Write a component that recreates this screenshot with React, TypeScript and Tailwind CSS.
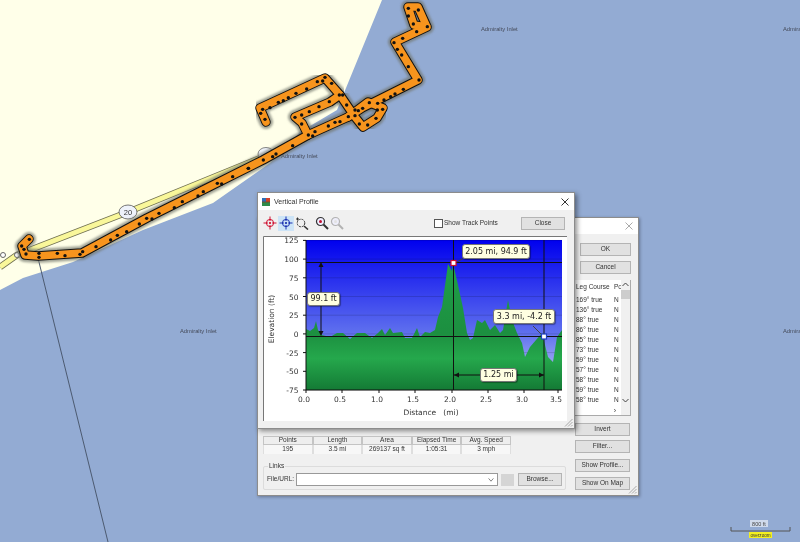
import React from "react";

const tr = (a: number[][], ox: number, oy: number) => a.map(([x, y]) => [x / 3 + ox, y / 3 + oy]);
const dotsA = tr([[505,25],[535,30],[505,48],[520,72],[562,80],[530,95],[488,115],[462,128],[472,148],[485,165],[505,200],[537,240],[490,268],[465,282],[452,290],[432,300],[413,310],[388,308],[368,325],[355,332],[345,330],[345,347],[325,350],[300,365],[285,367],[265,378],[225,395],[205,405],[218,408],[185,372],[185,345],[165,352],[208,335],[237,320],[268,305],[298,285],[308,285],[320,315],[275,250],[255,232],[248,243],[232,245],[200,267],[168,280],[145,293],[130,302],[115,307],[90,323],[68,328],[62,340],[75,358],[158,437],[108,462],[98,470],[70,480],[25,505],[358,372],[383,375],[408,355],[428,328],[412,330]], 240, 0);
const dotsB = tr([[88,298],[65,318],[72,328],[78,342],[117,340],[117,352],[172,340],[195,347],[240,343],[248,335],[288,320],[332,300],[352,286],[380,275],[418,252],[440,235],[456,237],[477,220],[523,203],[547,185],[594,168],[610,155],[652,130],[665,132],[698,110],[745,85]], 0, 140);

const trackPaths = [
  "M29 239 L22 246 L25 255 L38 256 L82 253 L147 218 L217 183 L263 160 L308 135 L348 117 L362 108 L418 80 L395 42 L427 27 L418 7 L408 7 L414 25 L427 27",
  "M308 135 L302 123 L295 117 L330 102 L340 95 L325 78 L260 108 L266 122",
  "M340 95 L355 117 L363 127 L377 118 L383 108 L368 102 L348 117",
];

const profile = "306,390 306,329 310,331 314,328 316,321 318,330 322,335 330,337 337,333 343,333 350,339 357,333 365,333 372,338 378,333 382,329 385,335 390,328 393,333 402,332 405,338 412,338 417,328 420,337 425,332 430,333 435,330 438,317 442,307 448,264 452,271 453,263 458,285 463,308 467,333 470,340 473,338 477,320 482,323 485,320 490,330 495,325 500,333 503,330 508,300 512,320 517,333 522,343 525,357 530,347 542,333 548,357 553,362 557,337 562,330 562,390";

const yTicks: [string, number][] = [["125",240.4],["100",259.1],["75",277.8],["50",296.5],["25",315.2],["0",333.9],["-25",352.6],["-50",371.3],["-75",390]];
const xTicks: [string, number][] = [["0.0",304],["0.5",340],["1.0",377],["1.5",413],["2.0",450],["2.5",486],["3.0",522],["3.5",556]];

const Btn = ({ children, className = "" }: { children: React.ReactNode; className?: string }) => (
  <div className={"flex items-center justify-center border border-[#b4b4b4] bg-[#e1e1e1] text-[6.5px] leading-none text-[#333] " + className}>{children}</div>
);

const Callout = ({ children, className = "" }: { children: React.ReactNode; className?: string }) => (
  <div className={"absolute flex items-center justify-center whitespace-nowrap rounded-[3px] border border-[#777] bg-[#ffffe1] font-['DejaVu_Sans',sans-serif] text-[8px] leading-none text-[#222] shadow-[1px_1px_1px_rgba(0,0,0,.35)] " + className}>{children}</div>
);

const Target = ({ c }: { c: string }) => (
  <svg width="14" height="14" viewBox="0 0 14 14" fill="none" stroke={c} strokeWidth="1">
    <circle cx="7" cy="7" r="3.6" />
    <path d="M7 0.5V5M7 9V13.5M0.5 7H5M9 7H13.5" />
    <circle cx="7" cy="7" r=".7" fill={c} />
  </svg>
);

const Mag = ({ c, dot, op = 1 }: { c: string; dot: string; op?: number }) => (
  <svg width="14" height="14" viewBox="0 0 14 14" fill="none" opacity={op}>
    <circle cx="5.5" cy="5.5" r="4" stroke={c} strokeWidth="1.2" fill="#eef" />
    <circle cx="5.5" cy="5.5" r="1.5" fill={dot} />
    <path d="M8.5 8.5L13 13" stroke={c} strokeWidth="2" />
  </svg>
);

const Cross = ({ c }: { c: string }) => (
  <svg width="8" height="8" viewBox="0 0 8 8" stroke={c} strokeWidth="1"><path d="M0.5 0.5L7.5 7.5M7.5 0.5L0.5 7.5" /></svg>
);

const Grip = () => (
  <svg width="9" height="9" viewBox="0 0 9 9" stroke="#a8a8a8" strokeWidth="1" className="absolute bottom-[1px] right-[1px]">
    <path d="M8.5 1L1 8.5M8.5 4L4 8.5M8.5 7L7 8.5" />
  </svg>
);

const Label = ({ x, y }: { x: number; y: number }) => (
  <text x={x} y={y} fontSize="5.8" fill="#454b5a" fontFamily="'Liberation Sans',sans-serif">Admiralty Inlet</text>
);

function MapCanvas() {
  return (
    <svg width="800" height="542" viewBox="0 0 800 542" className="block">
      <defs>
        <filter id="soft" x="-5%" y="-5%" width="110%" height="110%"><feGaussianBlur stdDeviation="1.2" /></filter>
      </defs>
      <rect width="800" height="542" fill="#93abd3" />
      <polygon points="0,0 382,0 337,110 300,132 270,163 213,203 143,230 73,262 23,278 0,290" fill="#ffffe9" />
      <path d="M0 267L17 255L35 248L128 212L263 157" stroke="#6f6f52" strokeWidth="6.5" fill="none" />
      <path d="M0 267L17 255L35 248L128 212L263 157" stroke="#f9f79a" strokeWidth="5" fill="none" />
      <path d="M38 258L108 542" stroke="#4c5a70" strokeWidth="1" />
      <circle cx="3" cy="255" r="2.5" fill="#fff" stroke="#666" />
      <circle cx="17" cy="255" r="2.5" fill="#fff" stroke="#666" />
      <ellipse cx="266" cy="154" rx="8" ry="6.5" fill="#eef2fa" stroke="#666" strokeWidth=".8" />
      <ellipse cx="128" cy="212" rx="9" ry="7" fill="#eef2fa" stroke="#555" strokeWidth=".8" />
      <text x="128" y="215" textAnchor="middle" fontSize="7.5" fill="#333" fontFamily="'Liberation Sans',sans-serif">20</text>
      <Label x={481} y={31} /><Label x={281} y={158} /><Label x={180} y={333} /><Label x={783} y={333} /><Label x={783} y={31} />
      <g fill="none" strokeLinejoin="round" strokeLinecap="round">
        {trackPaths.map((d) => <path key={d + "a"} d={d} stroke="#6e7268" strokeOpacity=".65" strokeWidth="14" filter="url(#soft)" />)}
        {trackPaths.map((d) => <path key={d + "b"} d={d} stroke="#111" strokeWidth="9.5" />)}
        {trackPaths.map((d) => <path key={d + "c"} d={d} stroke="#f7941d" strokeWidth="7.5" />)}
      </g>
      {[...dotsA, ...dotsB].map(([x, y], i) => <circle key={i} cx={x} cy={y} r="1.7" fill="#111" />)}
      <rect x="750" y="520" width="18" height="7" fill="#dfe6f2" opacity=".8" />
      <text x="759" y="526" textAnchor="middle" fontSize="5.5" fill="#444" fontFamily="'Liberation Sans',sans-serif">800 ft</text>
      <path d="M731 527V531H790V527" fill="none" stroke="#555" strokeWidth="1" />
      <rect x="749" y="532" width="23" height="6" fill="#f4f020" />
      <text x="760.5" y="537" textAnchor="middle" fontSize="4.6" fill="#333" fontFamily="'Liberation Sans',sans-serif">overzoom</text>
    </svg>
  );
}

function Chart() {
  const f = "'DejaVu Sans',sans-serif";
  return (
    <svg width="304" height="185" viewBox="263 236 304 185" className="block">
      <defs>
        <linearGradient id="sky" x1="0" y1="0" x2="0" y2="1">
          <stop offset="0" stopColor="#0000ee" />
          <stop offset=".62" stopColor="#5f70ee" />
          <stop offset="1" stopColor="#c9d0f5" />
        </linearGradient>
        <linearGradient id="earth" gradientUnits="userSpaceOnUse" x1="0" y1="264" x2="0" y2="390">
          <stop offset="0" stopColor="#1fa048" />
          <stop offset=".55" stopColor="#1c8f40" />
          <stop offset=".75" stopColor="#25a84c" />
          <stop offset="1" stopColor="#147a35" />
        </linearGradient>
      </defs>
      <rect x="263" y="236" width="304" height="185" fill="#fff" />
      <path d="M263.5 421V236.5H567" fill="none" stroke="#777" strokeWidth="1" />
      <rect x="306" y="240" width="256" height="150" fill="url(#sky)" />
      {yTicks.map(([, y]) => <path key={y} d={`M306 ${y}H562`} stroke="#000" strokeOpacity=".14" />)}
      <polygon points={profile} fill="url(#earth)" />
      <path d="M306 240V390H562" fill="none" stroke="#111" strokeWidth="1" />
      {yTicks.map(([t, y]) => (
        <g key={t}>
          <path d={`M303 ${y}H306`} stroke="#111" />
          <text x="298.5" y={y + 3} textAnchor="end" fontSize="7.5" fill="#333" fontFamily={f}>{t}</text>
        </g>
      ))}
      {xTicks.map(([t, x]) => (
        <g key={t}>
          <path d={`M${x + 2} 390V393`} stroke="#111" />
          <text x={x} y="402" textAnchor="middle" fontSize="7.5" fill="#333" fontFamily={f}>{t}</text>
        </g>
      ))}
      <text x="431" y="415" textAnchor="middle" fontSize="7.5" fill="#333" fontFamily={f} xmlSpace="preserve">Distance   (mi)</text>
      <text transform="translate(274 319) rotate(-90)" textAnchor="middle" fontSize="7.5" fill="#333" fontFamily={f}>Elevation (ft)</text>
      <g stroke="#111" strokeWidth="1" fill="#111">
        <path d="M306 262.5H562M306 336.5H562M453.5 240V390M544 240V390" fill="none" />
        <path d="M321 264V334" fill="none" />
        <path d="M321 262l-2.5 5h5zM321 336l-2.5-5h5z" stroke="none" />
        <path d="M454 375H544" fill="none" />
        <path d="M454 375l5-2.5v5zM544 375l-5-2.5v5z" stroke="none" />
      </g>
      <path d="M457 262L467 256" stroke="#444" />
      <path d="M542 335L533 326" stroke="#444" />
      <rect x="451" y="260.5" width="5" height="5" fill="#fff" stroke="#d01030" strokeWidth="1.2" />
      <rect x="541.5" y="334" width="5" height="5" fill="#fff" stroke="#2040c0" strokeWidth="1.2" />
    </svg>
  );
}

export default function App() {
  const cols = [["Points", "195"], ["Length", "3.5 mi"], ["Area", "269137 sq ft"], ["Elapsed Time", "1:05:31"], ["Avg. Speed", "3 mph"]];
  const rows = ["169° true", "136° true", "88° true", "86° true", "85° true", "73° true", "59° true", "57° true", "58° true", "59° true", "58° true"];
  return (
    <div className="relative h-[542px] w-[800px] overflow-hidden bg-[#93abd3] font-['Liberation_Sans',sans-serif] blur-[0.35px]">
      <MapCanvas />

      {/* back dialog */}
      <div className="absolute left-[257px] top-[217px] flex h-[279px] w-[382px] flex-col border border-[#8c8c8c] bg-[#f0f0f0] shadow-[1px_1px_3px_rgba(0,0,0,.3)]">
        <div className="flex h-[16px] shrink-0 items-center justify-end bg-white pr-[5px]"><Cross c="#aaa" /></div>
        <div className="flex flex-1">
          <div className="flex w-[317px] flex-col justify-end pb-[5px] pl-[5px]">
            <div className="flex text-[6.5px] leading-none text-[#333]">
              {cols.map(([h, v]) => (
                <div key={h} className="flex w-[49.6px] flex-col whitespace-nowrap text-center">
                  <div className="flex h-[9px] items-center justify-center border border-[#c4c4c4] bg-[#eeeeee]">{h}</div>
                  <div className="flex h-[9px] items-center justify-center border-x border-[#dedede] bg-[#f7f7f7]">{v}</div>
                </div>
              ))}
            </div>
            <div className="relative mt-[12px] h-[24px] w-[303px] rounded-[2px] border border-[#dcdcdc]">
              <span className="absolute left-[4px] top-[-4px] bg-[#f0f0f0] px-[1px] text-[6.5px] leading-none text-[#333]">Links</span>
              <div className="flex h-full items-center pl-[3px] pt-[3px] text-[6.5px] leading-none text-[#333]">
                <span className="w-[28px] whitespace-nowrap">File/URL:</span>
                <div className="ml-[1px] flex h-[13px] w-[202px] items-center justify-end border border-[#999] bg-white pr-[3px] text-[#777]">
                  <svg width="6" height="4" viewBox="0 0 7 5" fill="none" stroke="#666"><path d="M0.5 0.5L3.5 4L6.5 0.5" /></svg>
                </div>
                <div className="ml-[3px] h-[12px] w-[13px] bg-[#d5d5d5]" />
                <Btn className="ml-[4px] h-[13px] w-[44px]">Browse...</Btn>
              </div>
            </div>
          </div>
          <div className="flex w-[63px] flex-col pt-[9px]">
            <Btn className="ml-[5px] h-[13px] w-[51px]">OK</Btn>
            <Btn className="ml-[5px] mt-[5px] h-[13px] w-[51px]">Cancel</Btn>
            <div className="relative mt-[6px] h-[136px] w-[56px] overflow-hidden border-b border-r border-[#aaa] bg-white text-[6.5px] leading-none text-[#333]">
              <div className="flex h-[15px] items-center whitespace-nowrap pl-[1px]"><span className="w-[38px]">Leg Course</span><span className="w-[7px] overflow-hidden">Po</span></div>
              {rows.map((r) => (
                <div key={r} className="flex h-[10px] items-center whitespace-nowrap pl-[1px]"><span className="w-[38px]">{r}</span><span>N</span></div>
              ))}
              <div className="absolute bottom-0 right-0 top-0 flex w-[9px] flex-col items-center justify-between bg-[#f0f0f0] py-[2px] text-[#444]">
                <svg width="7" height="5" viewBox="0 0 7 5" fill="none" stroke="#444"><path d="M0.5 4L3.5 1L6.5 4" /></svg>
                <div className="absolute left-0 top-[10px] h-[9px] w-[9px] bg-[#cdcdcd]" />
                <svg width="7" height="5" viewBox="0 0 7 5" fill="none" stroke="#444" className="mb-[10px]"><path d="M0.5 1L3.5 4L6.5 1" /></svg>
              </div>
              <div className="absolute bottom-[1px] right-[14px] text-[7px]">›</div>
            </div>
            <Btn className="mt-[7px] h-[13px] w-[55px]">Invert</Btn>
            <Btn className="mt-[4px] h-[13px] w-[55px]">Filter...</Btn>
            <Btn className="mt-[6px] h-[13px] w-[55px] whitespace-nowrap">Show Profile...</Btn>
            <Btn className="mt-[5px] h-[13px] w-[55px] whitespace-nowrap">Show On Map</Btn>
          </div>
        </div>
        <Grip />
      </div>

      {/* profile window */}
      <div className="absolute left-[257px] top-[192px] flex h-[237px] w-[318px] flex-col border border-[#8c8c8c] bg-[#f0f0f0] shadow-[2px_2px_5px_rgba(0,0,0,.45)]">
        <div className="flex h-[17px] shrink-0 items-center bg-white pl-[4px] pr-[5px]">
          <svg width="8" height="8" viewBox="0 0 9 9"><rect width="9" height="9" fill="#7a4a2a" /><rect width="4.5" height="4" fill="#2f6db5" /><rect x="4.5" width="4.5" height="4" fill="#d0402a" /><rect y="5" width="9" height="4" fill="#2e8a4a" /></svg>
          <span className="ml-[4px] text-[7px] leading-none text-[#333]">Vertical Profile</span>
          <span className="ml-auto"><Cross c="#333" /></span>
        </div>
        <div className="flex h-[26px] shrink-0 items-center pl-[5px] pr-[8px]">
          <Target c="#d01030" />
          <div className="ml-[1px] flex h-[15px] w-[16px] items-center justify-center bg-[#cde4f7]"><Target c="#1a30b0" /></div>
          <div className="ml-[1px]">
            <svg width="14" height="14" viewBox="0 0 14 14" fill="none" stroke="#333"><circle cx="6" cy="7" r="3.8" strokeDasharray="2 1" /><path d="M9 10L13 13.5" strokeWidth="1.6" /><path d="M1 3H4M2.5 1.5V4.5" /></svg>
          </div>
          <div className="ml-[6px]"><Mag c="#333" dot="#c01030" /></div>
          <div className="ml-[1px]"><Mag c="#999" dot="#ddd" op={0.7} /></div>
          <div className="ml-auto mr-[1px] flex items-center">
            <div className="h-[9px] w-[9px] border border-[#555] bg-white" />
            <span className="ml-[1px] w-[77px] whitespace-nowrap text-[6.5px] leading-none text-[#333]">Show Track Points</span>
            <Btn className="h-[13px] w-[44px]">Close</Btn>
          </div>
        </div>
        <div className="relative ml-[5px] w-[304px]">
          <Chart />
          <Callout className="left-[199px] top-[8px] h-[15px] w-[68px]">2.05 mi, 94.9 ft</Callout>
          <Callout className="left-[44px] top-[56px] h-[14px] w-[33px]">99.1 ft</Callout>
          <Callout className="left-[230px] top-[73px] h-[15px] w-[62px]">3.3 mi, -4.2 ft</Callout>
          <Callout className="left-[217px] top-[132px] h-[14px] w-[37px]">1.25 mi</Callout>
        </div>
        <Grip />
      </div>
    </div>
  );
}
